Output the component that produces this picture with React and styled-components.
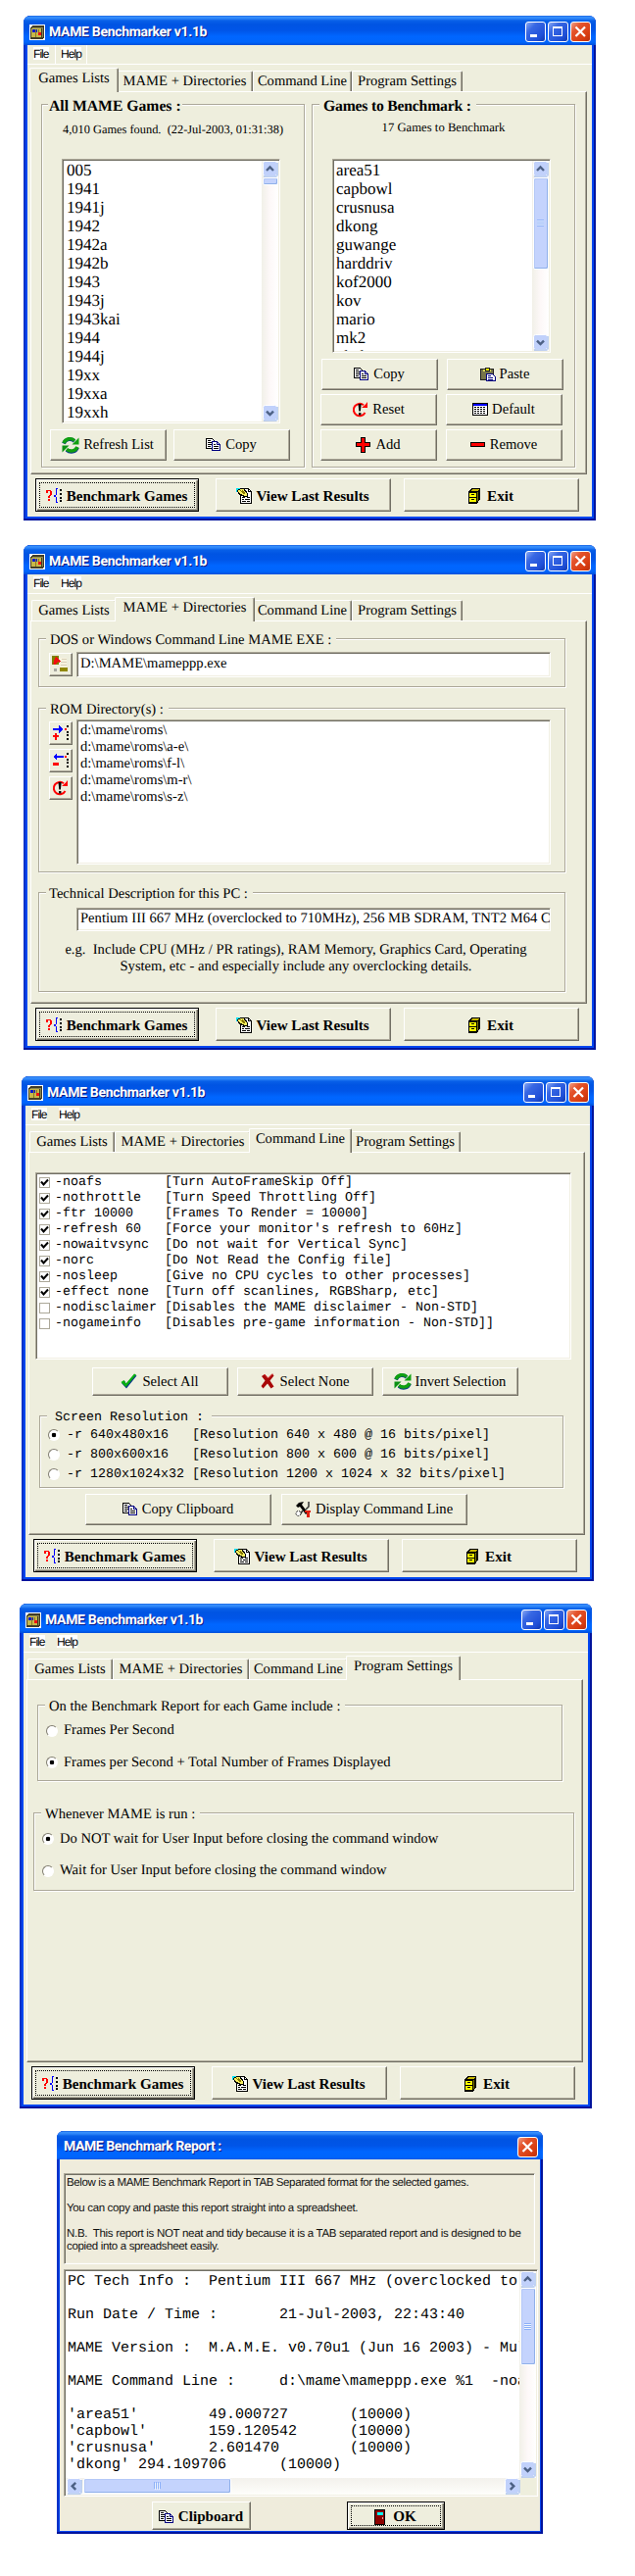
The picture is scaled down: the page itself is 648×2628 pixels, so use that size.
import React from "react";
import styled, { createGlobalStyle, css } from "styled-components";

const face = "#eeeedd";
const shade = "#aca899";
const dark = "#716f64";

const GlobalStyle = createGlobalStyle`
  * { box-sizing: border-box; }
  body { margin: 0; background: #fff; color: #000; }
`;

const Page = styled.main`
  width: 648px;
  height: 2628px;
  padding-top: 16px;
  overflow: hidden;
  background: #fff;
  font-family: "Liberation Serif", "Times New Roman", serif;
  font-size: 14.6px;
  text-rendering: geometricPrecision;
  white-space: pre;
`;

/* ---------- window chrome ---------- */

const Frame = styled.section`
  display: flex;
  flex-direction: column;
  width: ${(p) => p.$w || 584}px;
  height: ${(p) => p.$h || 515}px;
  margin: ${(p) => p.$top || 0}px 0 0 ${(p) => p.$left}px;
  padding: 0 ${(p) => p.$edge || 4}px ${(p) => p.$edge || 4}px;
  background: #0046f0;
  border-radius: 7px 7px 0 0;
  box-shadow: inset -2px -2px 0 #00139c, inset 2px 0 0 #0a32c8;
`;

const TitleBar = styled.header`
  display: flex;
  align-items: center;
  flex: none;
  height: ${(p) => p.$h || 30}px;
  margin: 0 -${(p) => p.$edge || 4}px;
  padding: 3px 5px 0 6px;
  border-radius: 7px 7px 0 0;
  background: linear-gradient(#0a50d8 0, #3a92fc 1px, #2c84f8 3px, #0860e8 5px, #0054e3 9px, #0055e8 15px, #0066ff 21px, #0065fc 27px, #004fd8 30px);
`;

const Title = styled.h1`
  flex: 1;
  margin: 0 0 0 ${(p) => p.$ml ?? 4}px;
  color: #fff;
  font: bold 14px/20px Roboto, "Liberation Sans", sans-serif;
  letter-spacing: ${(p) => p.$ls ?? -0.32}px;
  text-shadow: 1px 1px 0 #0a1883;
`;

const CaptionButtons = styled.div`
  display: flex;
  gap: 2px;
`;

const CaptionButton = styled.span`
  width: 21px;
  height: 21px;
  border: 1px solid #fff;
  border-radius: 3px;
  background: ${(p) =>
    p.$close
      ? "linear-gradient(135deg, #f0a088, #e4542c 30%, #d83c10 75%, #b83010)"
      : "linear-gradient(135deg, #88a8f4, #3868e4 30%, #2050d8 75%, #1038b0)"};
  svg { display: block; }
`;

const Body = styled.div`
  flex: 1;
  display: flex;
  flex-direction: column;
  background: ${face};
`;

const MenuBar = styled.nav`
  display: flex;
  flex: none;
  height: 20px;
  border-bottom: 1px solid #fff;
  font: 12px/14px "Liberation Sans", Arial, sans-serif;
  letter-spacing: -0.95px;
`;

const MenuItem = styled.span`
  width: ${(p) => p.$w}px;
  padding: 2px 5px 3px;
  border: 1px solid ${(p) => (p.$hot ? "#fff" : "transparent")};
  border-width: 0 1px;
  & > span { display: block; height: 13px; background: #fff; }
`;

const TabStrip = styled.div`
  display: flex;
  align-items: flex-end;
  flex: none;
  height: 27px;
  padding-left: 4px;
  position: relative;
  z-index: 1;
`;

const Tab = styled.span`
  flex: none;
  width: ${(p) => p.$w}px;
  height: 21px;
  border: 1px solid #fff;
  border-right: 1px solid ${dark};
  border-bottom: 0;
  border-radius: 2px 2px 0 0;
  box-shadow: inset -1px 0 0 ${shade};
  background: ${face};
  line-height: 21px;
  text-align: center;
  ${(p) =>
    p.$active &&
    css`
      width: ${p.$w + 4}px;
      height: 25px;
      margin: 0 -2px -1px;
      position: relative;
      z-index: 1;
    `}
`;

const Panel = styled.div`
  flex: none;
  height: 391px;
  margin: 0 5px 0 3px;
  border: 1px solid #fff;
  border-right-color: ${dark};
  border-bottom-color: ${dark};
  box-shadow: inset -1px -1px 0 ${shade};
  padding: ${(p) => p.$pad};
`;

const Footer = styled.footer`
  display: flex;
  padding: 4px 0 0 8px;
`;

/* ---------- controls ---------- */

const Button = styled.button`
  display: flex;
  align-items: center;
  justify-content: center;
  gap: ${(p) => p.$gap ?? 4}px;
  flex: none;
  width: ${(p) => p.$w}px;
  height: ${(p) => p.$h || 32}px;
  margin: 0 0 0 ${(p) => p.$ml || 0}px;
  padding: ${(p) => (p.$bold ? "2px" : 0)} 1px ${(p) => (p.$bold ? 0 : "1px")} 0;
  border: 1px solid;
  border-color: #fff ${dark} ${dark} #fff;
  box-shadow: inset -1px -1px 0 ${shade};
  background: ${face};
  color: #000;
  font: ${(p) => (p.$bold ? "bold 15.1px" : "14.6px")} "Liberation Serif", serif;
  white-space: pre;
  svg { flex: none; }
  ${(p) =>
    p.$focus &&
    css`
      border-color: #000;
      box-shadow: inset 1px 1px 0 #fff, inset -1px -1px 0 ${dark}, inset -2px -2px 0 ${shade};
      outline: 1px dotted #000;
      outline-offset: -5px;
    `}
`;

const Sunken = styled.div`
  width: ${(p) => p.$w}px;
  height: ${(p) => p.$h}px;
  margin: ${(p) => p.$m || 0};
  border: 1px solid;
  border-color: ${shade} #fff #fff ${shade};
  box-shadow: inset 1px 1px 0 ${dark}, inset -1px -1px 0 #f1efe2;
  background: ${(p) => p.$bg || "#fff"};
  padding: 1px;
  overflow: hidden;
`;

const Field = styled(Sunken)`
  padding: 0 1px 0 3px;
  line-height: ${(p) => p.$h - 3}px;
`;

const ListBox = styled(Sunken)`
  display: flex;
  justify-content: space-between;
  font-size: 17px;
  line-height: 19px;
`;

const Items = styled.div`
  padding-left: ${(p) => p.$pl ?? 3}px;
  overflow: hidden;
  flex: 1;
`;

const Bar = styled.div`
  display: flex;
  flex-direction: ${(p) => (p.$horizontal ? "row" : "column")};
  flex: none;
  ${(p) => (p.$horizontal ? "height: 17px; width: 464px;" : "width: 17px;")}
  background: ${(p) => (p.$horizontal ? "linear-gradient(#f3f1ec, #fefefb)" : "linear-gradient(90deg, #f1f0e8, #fdf8f8 50%, #fff)")};
  svg { display: block; flex: none; }
`;

const Thumb = styled.div`
  flex: none;
  display: flex;
  align-items: center;
  justify-content: center;
  ${(p) => (p.$horizontal ? `width: ${p.$size}px; height: 16px;` : `height: ${p.$size}px; width: 16px;`)}
  margin-left: 1px;
  border: 1px solid #fff;
  border-radius: 2px;
  background: #c4d3fd;
  box-shadow: inset -1px -1px 0 #8fb0ea, inset 1px 1px 0 #b4c8f6;
`;

const Filler = styled.span`
  flex: 1;
`;

const Group = styled.div`
  flex: none;
  width: ${(p) => p.$w}px;
  height: ${(p) => p.$h}px;
  margin: ${(p) => p.$m || 0};
  border: 1px solid ${shade};
  box-shadow: 1px 1px 0 #fff, inset 1px 1px 0 #fff;
`;

const Legend = styled.div`
  width: fit-content;
  height: 18px;
  margin: -9px 0 0 ${(p) => p.$ml ?? 7}px;
  padding: 0 ${(p) => p.$pr ?? 5}px 0 ${(p) => p.$pl ?? 4}px;
  background: ${face};
  line-height: 21px;
  letter-spacing: ${(p) => p.$ls || 0}px;
  ${(p) => p.$bold && "font-weight: bold; font-size: 15.7px; line-height: 22px;"}
`;

const Info = styled.div`
  height: 46px;
  font-size: ${(p) => p.$size}px;
  line-height: ${(p) => p.$lh}px;
  text-align: center;
`;

const Row = styled.div`
  display: flex;
  gap: ${(p) => p.$gap || 0}px;
  padding: ${(p) => p.$pad || 0};
`;

const Stack = styled.div`
  display: flex;
  flex-direction: column;
  gap: 4px;
  padding-top: ${(p) => p.$top}px;
`;

const Hint = styled.p`
  margin: 11px 0 0;
  width: 524px;
  text-align: center;
  line-height: 17px;
`;

const MemoRow = styled.div`
  height: 17px;
  line-height: 20px;
`;

const Mono = styled.div`
  font-family: "Liberation Mono", monospace;
  font-size: ${(p) => p.$size || 13.33}px;
`;

const SwitchList = styled(Sunken)`
  font-family: "Liberation Mono", monospace;
  font-size: 13.33px;
`;

const Option = styled.label`
  display: flex;
  align-items: center;
  gap: ${(p) => p.$gap}px;
  height: ${(p) => p.$h}px;
  padding-left: ${(p) => p.$pl || 0}px;
`;

const Box = styled.span`
  width: 11px;
  height: 11px;
  flex: none;
  border: 1px solid ${shade};
  svg { display: block; }
`;

const Dot = styled.span`
  width: 12px;
  height: 12px;
  flex: none;
  border-radius: 50%;
  border: 1.5px solid;
  border-color: #807d70 #fff #fff #807d70;
  background: ${(p) => (p.$on ? "radial-gradient(circle at 50% 50%, #000 0 2px, #fff 2.6px)" : "#fff")};
`;

const Memo = styled(Sunken)`
  padding: 3px 2px;
  font: 11.5px/13px "Liberation Sans", Arial, sans-serif;
  color: #111;
`;

const MemoLine = styled.div`
  height: 13px;
  letter-spacing: ${(p) => p.$ls ?? -0.34}px;
`;

const Report = styled(Sunken)`
  display: flex;
  flex-direction: column;
`;

const ReportText = styled(Mono)`
  flex: 1;
  height: 211px;
  padding: 2px 0 0 2px;
  line-height: 17px;
  overflow: hidden;
`;

const Corner = styled.span`
  flex: 1;
  background: ${face};
`;

const ReportBody = styled(Body)`
  padding: 14px 0 0 4px;
  background-color: #efecdc;
`;

/* ---------- drawings ---------- */

const Svg = ({ w = 16, h = 16, children }) => (
  <svg width={w} height={h} viewBox={`0 0 ${w} ${h}`} shapeRendering="crispEdges">
    {children}
  </svg>
);

const AppIcon = () => (
  <Svg>
    <path d="M0 0h16v16H0z" fill="#fff" />
    <path d="M1 3l2-2h12v12l-2 2H1z" fill="#403c28" />
    <path d="M2 4h10v9H2z" fill="#c8b848" />
    <path d="M3 3h11v1H3zM13 4h1v9h-1z" fill="#8c8850" />
    <path d="M3 5h5v3H3z" fill="#0818d0" />
    <path d="M9 8h3v3H9z" fill="#f01010" />
    <path d="M6 5h1v8H6zM9 5h1v3H9z" fill="#887828" />
  </Svg>
);

const CopyIcon = () => (
  <Svg h={14}>
    <path d="M.5.5h6l2 2v8h-8z" fill="#fff" stroke="#000" />
    <path d="M2 2.500h3M2 4.500h5M2 6.500h5M2 8.500h3" stroke="#000" />
    <path d="M6.500 3.500h5l3 3v6h-8z" fill="#fff" stroke="#000080" />
    <path d="M11.500 3.500v3h3" fill="none" stroke="#000080" />
    <path d="M8 6.500h2M8 8.500h5M8 10.500h5" stroke="#000" />
  </Svg>
);

const PasteIcon = () => (
  <Svg>
    <path d="M.5 2.500h13v11H.5z" fill="#77754a" stroke="#222" />
    <path d="M3 3.500h8M3 4.500h8" stroke="#d8d850" />
    <path d="M5 1h4v3H5z" fill="#e8e800" stroke="#222" />
    <path d="M6.500 7.500h6l3 3v4h-9z" fill="#fff" stroke="#000080" />
    <path d="M8 9.500h3M8 11.500h5M8 13h5" stroke="#000080" />
  </Svg>
);

const SwapIcon = () => (
  <svg width="18" height="18" viewBox="0 0 18 18">
    <path d="M2 7.500C4 2.500 9.500 2 13 5" fill="none" stroke="#083888" strokeWidth="3.800" />
    <path d="M2 7C4 2 9.500 1.500 13 4.500" fill="none" stroke="#10a010" strokeWidth="3.400" />
    <path d="M17.500 1.500V8.500h-7z" fill="#10a010" />
    <path d="M16 11.500C14 16.500 8.500 17 5 14" fill="none" stroke="#083888" strokeWidth="3.800" />
    <path d="M16 11C14 15.500 8.500 16 5 13.300" fill="none" stroke="#10a010" strokeWidth="3.400" />
    <path d="M.5 16.500V9.500h7z" fill="#0c9014" />
  </svg>
);

const ResetIcon = () => (
  <svg width="17" height="16" viewBox="0 0 17 16">
    <path d="M12 3.300A6.200 6.200 0 1 0 13.500 11" fill="none" stroke="#f00" strokeWidth="2" />
    <path d="M10 6h6V0l-2 2.500z" fill="#f00" />
    <path d="M6.500 2h3.200L8.900 9.500H7.300zM7 11h2.400v2.500H7z" />
  </svg>
);

const TableIcon = () => (
  <Svg h={13}>
    <path d="M.5.5h15v12H.5z" fill="#fff" stroke="#000" />
    <path d="M1 1h14v2H1z" fill="#00f" />
    <path d="M2 4.500h12M2 6.500h12M2 8.500h12M2 10.500h12" stroke="#000" strokeDasharray="2 1" />
  </Svg>
);

const PlusIcon = () => (
  <Svg>
    <path d="M5.500.5h4v5h5v4h-5v6h-4v-6h-5v-4h5z" fill="#f00" stroke="#000" />
  </Svg>
);

const MinusIcon = () => (
  <Svg h={6}>
    <path d="M.5.5h14v4H.5z" fill="#f00" stroke="#000" />
  </Svg>
);

const QueryIcon = () => (
  <Svg w={17}>
    <path d="M0 2h5v1H0zM0 3h2v2H0zM4 3h2v4H4zM3 7h2v1H3zM2 8h2v2H2zM2 11h2v2H2z" fill="#f00" />
    <path d="M12 0.500h-1.500v6L8.500 8l2 1.500v5H12" fill="none" stroke="#00f" />
    <path d="M14 1h2v2h-2zM14 5h2v2h-2zM14 9h2v2h-2zM14 12h2v2h-2z" />
  </Svg>
);

const ViewIcon = () => (
  <Svg>
    <path d="M4.500.5h8l3 3v12h-11z" fill="#fff" stroke="#000" />
    <path d="M12.500.5v3h3M6 9.500h3M11 9.500h3M6 11.500h2M9 11.500h5M6 13.500h4M11 13.500h3" fill="none" stroke="#000" />
    <path d="M0 0h4v4H0z" fill="#00e0f0" />
    <path d="M1.500 2.500l3-2h3l4 5v3h-3l-6-3z" fill="#f8f060" stroke="#000" />
    <path d="M4 2l4 4M6 2l3 4" stroke="#887800" />
  </Svg>
);

const ExitIcon = () => (
  <Svg w={12}>
    <path d="M0 3l3-3h8.500v12l-3 4H0z" fill="#000" />
    <path d="M2 3l2-2h7L9 3z" fill="#c8b800" />
    <path d="M1 5h7v4H1zM1 10h7v4H1z" fill="#ff0" />
    <path d="M3 6.500h3M3 11.500h3" stroke="#000" />
    <path d="M9.500 4v9" stroke="#807800" />
  </Svg>
);

const TickIcon = () => (
  <svg width="17" height="16" viewBox="0 0 17 16">
    <path d="M1 10l3-2.500 2 3.500L14 1.500l2.500 1L6 15.500z" fill="#083888" />
    <path d="M.5 9L3.500 7l2 3.500L14 .5l2 1L5.500 14z" fill="#08b010" />
  </svg>
);

const CrossIcon = () => (
  <svg width="14" height="16" viewBox="0 0 14 16">
    <path d="M1 3l3-2 3.500 4L12 .5l1.500 2-4 5 4 6-3 2-3.500-5-4.500 5L.5 13l4-5.500z" fill="#a80808" />
    <path d="M4 1l3.500 4L12 .5" fill="none" stroke="#e04040" />
  </svg>
);

const ToolsIcon = () => (
  <svg width="17" height="16" viewBox="0 0 17 16">
    <path d="M1 4L4 1l5-1-2 3 6 8-2 2-6-8-2 1z" />
    <path d="M14 0v5l-3 3M8 9l-3 4" fill="none" stroke="#333" strokeWidth="1.500" />
    <circle cx="3.500" cy="12" r="2.500" fill="#fff" stroke="#222" strokeDasharray="2 1" />
    <path d="M10 9h6v2h-1v5h-3v-5h-2z" fill="#e02010" />
  </svg>
);

const DoorIcon = () => (
  <Svg w={12}>
    <path d="M.5.5h10v15H.5z" fill="#8c0000" stroke="#000" />
    <path d="M3 3h6v3H3z" fill="#0ff" />
    <path d="M8 8h1v2H8z" fill="#f0a0a0" />
  </Svg>
);

const BrowseIcon = () => (
  <Svg w={17} h={17}>
    <path d="M0 0h7v9H0z" fill="#808000" />
    <path d="M8 2h7v10H8z" fill="#f8f4e0" />
    <path d="M10 3h5M9 6h6M9 9h6" stroke="#d8d0b8" />
    <path d="M1 8l3-7 5 4-2 2-1-1-3 4z" fill="#f01010" />
    <path d="M8 12h8v4H8z" fill="#908800" />
    <path d="M2 13h3v3H2z" fill="#a8a8a0" />
  </Svg>
);

const DirIcon = ({ remove }) => (
  <Svg>
    {remove ? (
      <path d="M0 4l4-4v3h7v2H4v3z" fill="#00f" />
    ) : (
      <path d="M10 4L6 0v3H0v2h6v3z" fill="#00f" />
    )}
    <path d={remove ? "M0 10h6v3H0z" : "M2 8h2v2h2v2H4v3H2v-3H0v-2h2z"} fill="#f00" />
    <path d="M12 3h2v2h-2z" fill="#f00" />
    <path d="M14 0h2v2h-2zM14 6h2v2h-2zM14 9h2v2h-2zM14 13h2v2h-2z" />
  </Svg>
);

const CheckGlyph = () => (
  <svg width="9" height="9" viewBox="0 0 9 9">
    <path d="M1 3.500l2.500 3L8 1.500" fill="none" stroke="#000" strokeWidth="2" />
  </svg>
);

const MinGlyph = () => (
  <Svg w={19} h={19}>
    <path d="M4 12h7v3H4z" fill="#fff" />
  </Svg>
);

const MaxGlyph = () => (
  <Svg w={19} h={19}>
    <path d="M4.500 4.500h9v9h-9zM4 5.500h10" fill="none" stroke="#fff" />
  </Svg>
);

const CloseGlyph = () => (
  <svg width="19" height="19" viewBox="0 0 19 19">
    <path d="M4.500 4.500l9.500 9.500M14 4.500L4.500 14" stroke="#fff" strokeWidth="2.200" />
  </svg>
);

const arrowTurn = { up: 0, right: 90, down: 180, left: 270 };

const Arrow = ({ dir }) => (
  <svg width="17" height="17" viewBox="0 0 17 17">
    <rect x="1.500" y=".5" width="14" height="15" rx="2" fill="#c1d1fb" stroke="#fff" />
    <path d="M2 16h13.500M16 2v13.500" stroke="#84a8e8" />
    <path d="M5 10l3.500-3.500L12 10" fill="none" stroke="#4d6185" strokeWidth="2.400" transform={`rotate(${arrowTurn[dir]} 8.500 8.300)`} />
  </svg>
);

const Grip = ({ turned }) => (
  <svg width="8" height="8" viewBox="0 0 8 8" shapeRendering="crispEdges">
    <path d={turned ? "M.5 0v7M2.500 0v7M4.500 0v7M6.500 0v7" : "M0 .5h7M0 2.500h7M0 4.500h7M0 6.500h7"} stroke="#8cb0f8" />
    <path d={turned ? "M1.500 1v7M3.500 1v7M5.500 1v7" : "M0 1.500h7M0 3.500h7M0 5.500h7"} stroke="#eef4fe" />
  </svg>
);

const Scroll = ({ size, horizontal, grip }) => (
  <Bar $horizontal={horizontal}>
    <Arrow dir={horizontal ? "left" : "up"} />
    <Thumb $size={size} $horizontal={horizontal}>{grip && <Grip turned={horizontal} />}</Thumb>
    <Filler />
    <Arrow dir={horizontal ? "right" : "down"} />
  </Bar>
);

/* ---------- windows ---------- */

const tabs = [
  ["Games Lists", 87],
  ["MAME + Directories", 139],
  ["Command Line", 101],
  ["Program Settings", 113],
];

function MainWindow({ active, left, top, hot, pad, children }) {
  return (
    <Frame $left={left} $top={top}>
      <TitleBar>
        <AppIcon />
        <Title>MAME Benchmarker v1.1b</Title>
        <CaptionButtons>
          <CaptionButton><MinGlyph /></CaptionButton>
          <CaptionButton><MaxGlyph /></CaptionButton>
          <CaptionButton $close><CloseGlyph /></CaptionButton>
        </CaptionButtons>
      </TitleBar>
      <Body>
        <MenuBar>
          <MenuItem $w={28}><span>File</span></MenuItem>
          <MenuItem $w={33} $hot={hot}><span>Help</span></MenuItem>
        </MenuBar>
        <TabStrip>
          {tabs.map(([name, w], i) => (
            <Tab key={name} $w={w} $active={i === active}>{name}</Tab>
          ))}
        </TabStrip>
        <Panel $pad={pad}>{children}</Panel>
        <Footer>
          <Button $w={167} $h={34} $bold $focus><QueryIcon />Benchmark Games</Button>
          <Button $w={179} $h={34} $ml={17} $bold><ViewIcon />View Last Results</Button>
          <Button $w={179} $h={34} $ml={13} $gap={7} $bold><ExitIcon />Exit</Button>
        </Footer>
      </Body>
    </Frame>
  );
}

const allGames = ["005", "1941", "1941j", "1942", "1942a", "1942b", "1943", "1943j", "1943kai", "1944", "1944j", "19xx", "19xxa", "19xxh"];
const benchGames = ["area51", "capbowl", "crusnusa", "dkong", "guwange", "harddriv", "kof2000", "kov", "mario", "mk2", "nbahangt"];
const romDirs = ["d:\\mame\\roms\\", "d:\\mame\\roms\\a-e\\", "d:\\mame\\roms\\f-l\\", "d:\\mame\\roms\\m-r\\", "d:\\mame\\roms\\s-z\\"];
const switches = [
  ["-noafs", "[Turn AutoFrameSkip Off]", true],
  ["-nothrottle", "[Turn Speed Throttling Off]", true],
  ["-ftr 10000", "[Frames To Render = 10000]", true],
  ["-refresh 60", "[Force your monitor's refresh to 60Hz]", true],
  ["-nowaitvsync", "[Do not wait for Vertical Sync]", true],
  ["-norc", "[Do Not Read the Config file]", true],
  ["-nosleep", "[Give no CPU cycles to other processes]", true],
  ["-effect none", "[Turn off scanlines, RGBSharp, etc]", true],
  ["-nodisclaimer", "[Disables the MAME disclaimer - Non-STD]", false],
  ["-nogameinfo", "[Disables pre-game information - Non-STD]]", false],
];
const resolutions = [
  "-r 640x480x16   [Resolution 640 x 480 @ 16 bits/pixel]",
  "-r 800x600x16   [Resolution 800 x 600 @ 16 bits/pixel]",
  "-r 1280x1024x32 [Resolution 1200 x 1024 x 32 bits/pixel]",
];
const report = [
  "PC Tech Info :  Pentium III 667 MHz (overclocked to",
  "",
  "Run Date / Time :       21-Jul-2003, 22:43:40",
  "",
  "MAME Version :  M.A.M.E. v0.70u1 (Jun 16 2003) - Mul",
  "",
  "MAME Command Line :     d:\\mame\\mameppp.exe %1  -noa",
  "",
  "'area51'        49.000727       (10000)",
  "'capbowl'       159.120542      (10000)",
  "'crusnusa'      2.601470        (10000)",
  "'dkong' 294.109706      (10000)",
];

const GamesWindow = () => (
  <MainWindow active={0} left={24} hot pad="12px 10px">
    <Row $gap={7}>
      <Group $w={269} $h={371}>
        <Legend $bold $ml={6} $pl={1} $pr={1}>All MAME Games :</Legend>
        <Info $size={12.4} $lh={33}>4,010 Games found.  (22-Jul-2003, 01:31:38)</Info>
        <ListBox $w={223} $h={270} $m="0 0 0 20px">
          <Items>{allGames.map((g) => <div key={g}>{g}</div>)}</Items>
          <Scroll size={8} />
        </ListBox>
        <Row $gap={7} $pad="6px 0 0 8px">
          <Button $w={119}><SwapIcon />Refresh List</Button>
          <Button $w={119}><CopyIcon />Copy</Button>
        </Row>
      </Group>
      <Group $w={269} $h={371}>
        <Legend $bold $ls={-0.2}>Games to Benchmark :</Legend>
        <Info $size={12.7} $lh={29}>17 Games to Benchmark</Info>
        <ListBox $w={223} $h={198} $m="0 0 0 20px">
          <Items $pl={2}>{benchGames.map((g) => <div key={g}>{g}</div>)}</Items>
          <Scroll size={94} grip />
        </ListBox>
        <Row $gap={9} $pad="6px 0 0 9px">
          <Button $w={119}><CopyIcon />Copy</Button>
          <Button $w={119}><PasteIcon />Paste</Button>
        </Row>
        <Row $gap={9} $pad="4px 0 0 8px">
          <Button $w={119}><ResetIcon />Reset</Button>
          <Button $w={119}><TableIcon />Default</Button>
        </Row>
        <Row $gap={9} $pad="4px 0 0 8px">
          <Button $w={119}><PlusIcon />Add</Button>
          <Button $w={119}><MinusIcon />Remove</Button>
        </Row>
      </Group>
    </Row>
  </MainWindow>
);

const DirectoriesWindow = () => (
  <MainWindow active={1} left={24} top={25} pad="17px 7px">
    <Group $w={538} $h={50}>
      <Legend>DOS or Windows Command Line MAME EXE :</Legend>
      <Row $gap={4} $pad="4px 0 0 10px">
        <Stack $top={1}><Button $w={24} $h={24}><BrowseIcon /></Button></Stack>
        <Field $w={484} $h={26}>D:\MAME\mameppp.exe</Field>
      </Row>
    </Group>
    <Group $w={538} $h={168} $m="21px 0 0">
      <Legend>ROM Directory(s) :</Legend>
      <Row $gap={4} $pad="2px 0 0 10px">
        <Stack $top={2}>
          <Button $w={24} $h={24}><DirIcon /></Button>
          <Button $w={24} $h={24}><DirIcon remove /></Button>
          <Button $w={24} $h={24}><ResetIcon /></Button>
        </Stack>
        <Field $w={484} $h={148}>
          {romDirs.map((d) => <MemoRow key={d}>{d}</MemoRow>)}
        </Field>
      </Row>
    </Group>
    <Group $w={538} $h={102} $m="20px 0 0">
      <Legend $pl={3}>Technical Description for this PC :</Legend>
      <Field $w={484} $h={24} $m="6px 0 0 38px">Pentium III 667 MHz (overclocked to 710MHz), 256 MB SDRAM, TNT2 M64 C</Field>
      <Hint>{"e.g.  Include CPU (MHz / PR ratings), RAM Memory, Graphics Card, Operating\nSystem, etc - and especially include any overclocking details."}</Hint>
    </Group>
  </MainWindow>
);

const CommandWindow = () => (
  <MainWindow active={2} left={22} top={27} pad="20px 6px">
    <SwitchList $w={547} $h={191}>
      {switches.map(([flag, note, on]) => (
        <Option key={flag} $h={16} $gap={5} $pl={2}>
          <Box>{on && <CheckGlyph />}</Box>
          {flag.padEnd(14) + note}
        </Option>
      ))}
    </SwitchList>
    <Row $gap={9} $pad="8px 0 0 58px">
      <Button $w={139} $h={29} $gap={5}><TickIcon />Select All</Button>
      <Button $w={139} $h={29} $gap={6}><CrossIcon />Select None</Button>
      <Button $w={139} $h={29}><SwapIcon />Invert Selection</Button>
    </Row>
    <Group $w={535} $h={74} $m="20px 0 0 4px">
      <Mono>
        <Legend $pl={8} $pr={8}>Screen Resolution :</Legend>
        {resolutions.map((r, i) => (
          <Option key={r} $h={20} $gap={7} $pl={8}><Dot $on={i === 0} />{r}</Option>
        ))}
      </Mono>
    </Group>
    <Row $gap={10} $pad="6px 0 0 51px">
      <Button $w={190}><CopyIcon />Copy Clipboard</Button>
      <Button $w={190}><ToolsIcon />Display Command Line</Button>
    </Row>
  </MainWindow>
);

const SettingsWindow = () => (
  <MainWindow active={3} left={20} top={23} pad="25px 6px">
    <Group $w={536} $h={78} $m="0 0 0 4px">
      <Legend>On the Benchmark Report for each Game include :</Legend>
      <Option $h={33} $gap={6} $pl={8}><Dot />Frames Per Second</Option>
      <Option $h={32} $gap={6} $pl={8}><Dot $on />Frames per Second + Total Number of Frames Displayed</Option>
    </Group>
    <Group $w={552} $h={80} $m="32px 0 0">
      <Legend>Whenever MAME is run :</Legend>
      <Option $h={34} $gap={6} $pl={8}><Dot $on />Do NOT wait for User Input before closing the command window</Option>
      <Option $h={31} $gap={6} $pl={8}><Dot />Wait for User Input before closing the command window</Option>
    </Group>
  </MainWindow>
);

const ReportWindow = () => (
  <Frame $left={58} $top={23} $w={496} $h={411} $edge={3}>
    <TitleBar $h={29} $edge={3}>
      <Title $ls={-0.42} $ml={1}>MAME Benchmark Report :</Title>
      <CaptionButton $close><CloseGlyph /></CaptionButton>
    </TitleBar>
    <ReportBody>
      <Memo $w={481} $h={93} $bg="#efecdc">
        <MemoLine $ls={-0.38}>Below is a MAME Benchmark Report in TAB Separated format for the selected games.</MemoLine>
        <MemoLine />
        <MemoLine>You can copy and paste this report straight into a spreadsheet.</MemoLine>
        <MemoLine />
        <MemoLine $ls={-0.3}>N.B.  This report is NOT neat and tidy because it is a TAB separated report and is designed to be</MemoLine>
        <MemoLine>copied into a spreadsheet easily.</MemoLine>
      </Memo>
      <Report $w={484} $h={232} $m="5px 0">
        <Row>
          <ReportText $size={15}>{report.join("\n")}</ReportText>
          <Scroll size={79} grip />
        </Row>
        <Row>
          <Scroll horizontal size={151} grip />
          <Corner />
        </Row>
      </Report>
      <Row $gap={98} $pad="0 0 0 90px">
        <Button $w={101} $h={29} $bold><CopyIcon />Clipboard</Button>
        <Button $w={100} $h={29} $gap={7} $bold $focus><DoorIcon />OK</Button>
      </Row>
    </ReportBody>
  </Frame>
);

export default function App() {
  return (
    <Page>
      <GlobalStyle />
      <GamesWindow />
      <DirectoriesWindow />
      <CommandWindow />
      <SettingsWindow />
      <ReportWindow />
    </Page>
  );
}
